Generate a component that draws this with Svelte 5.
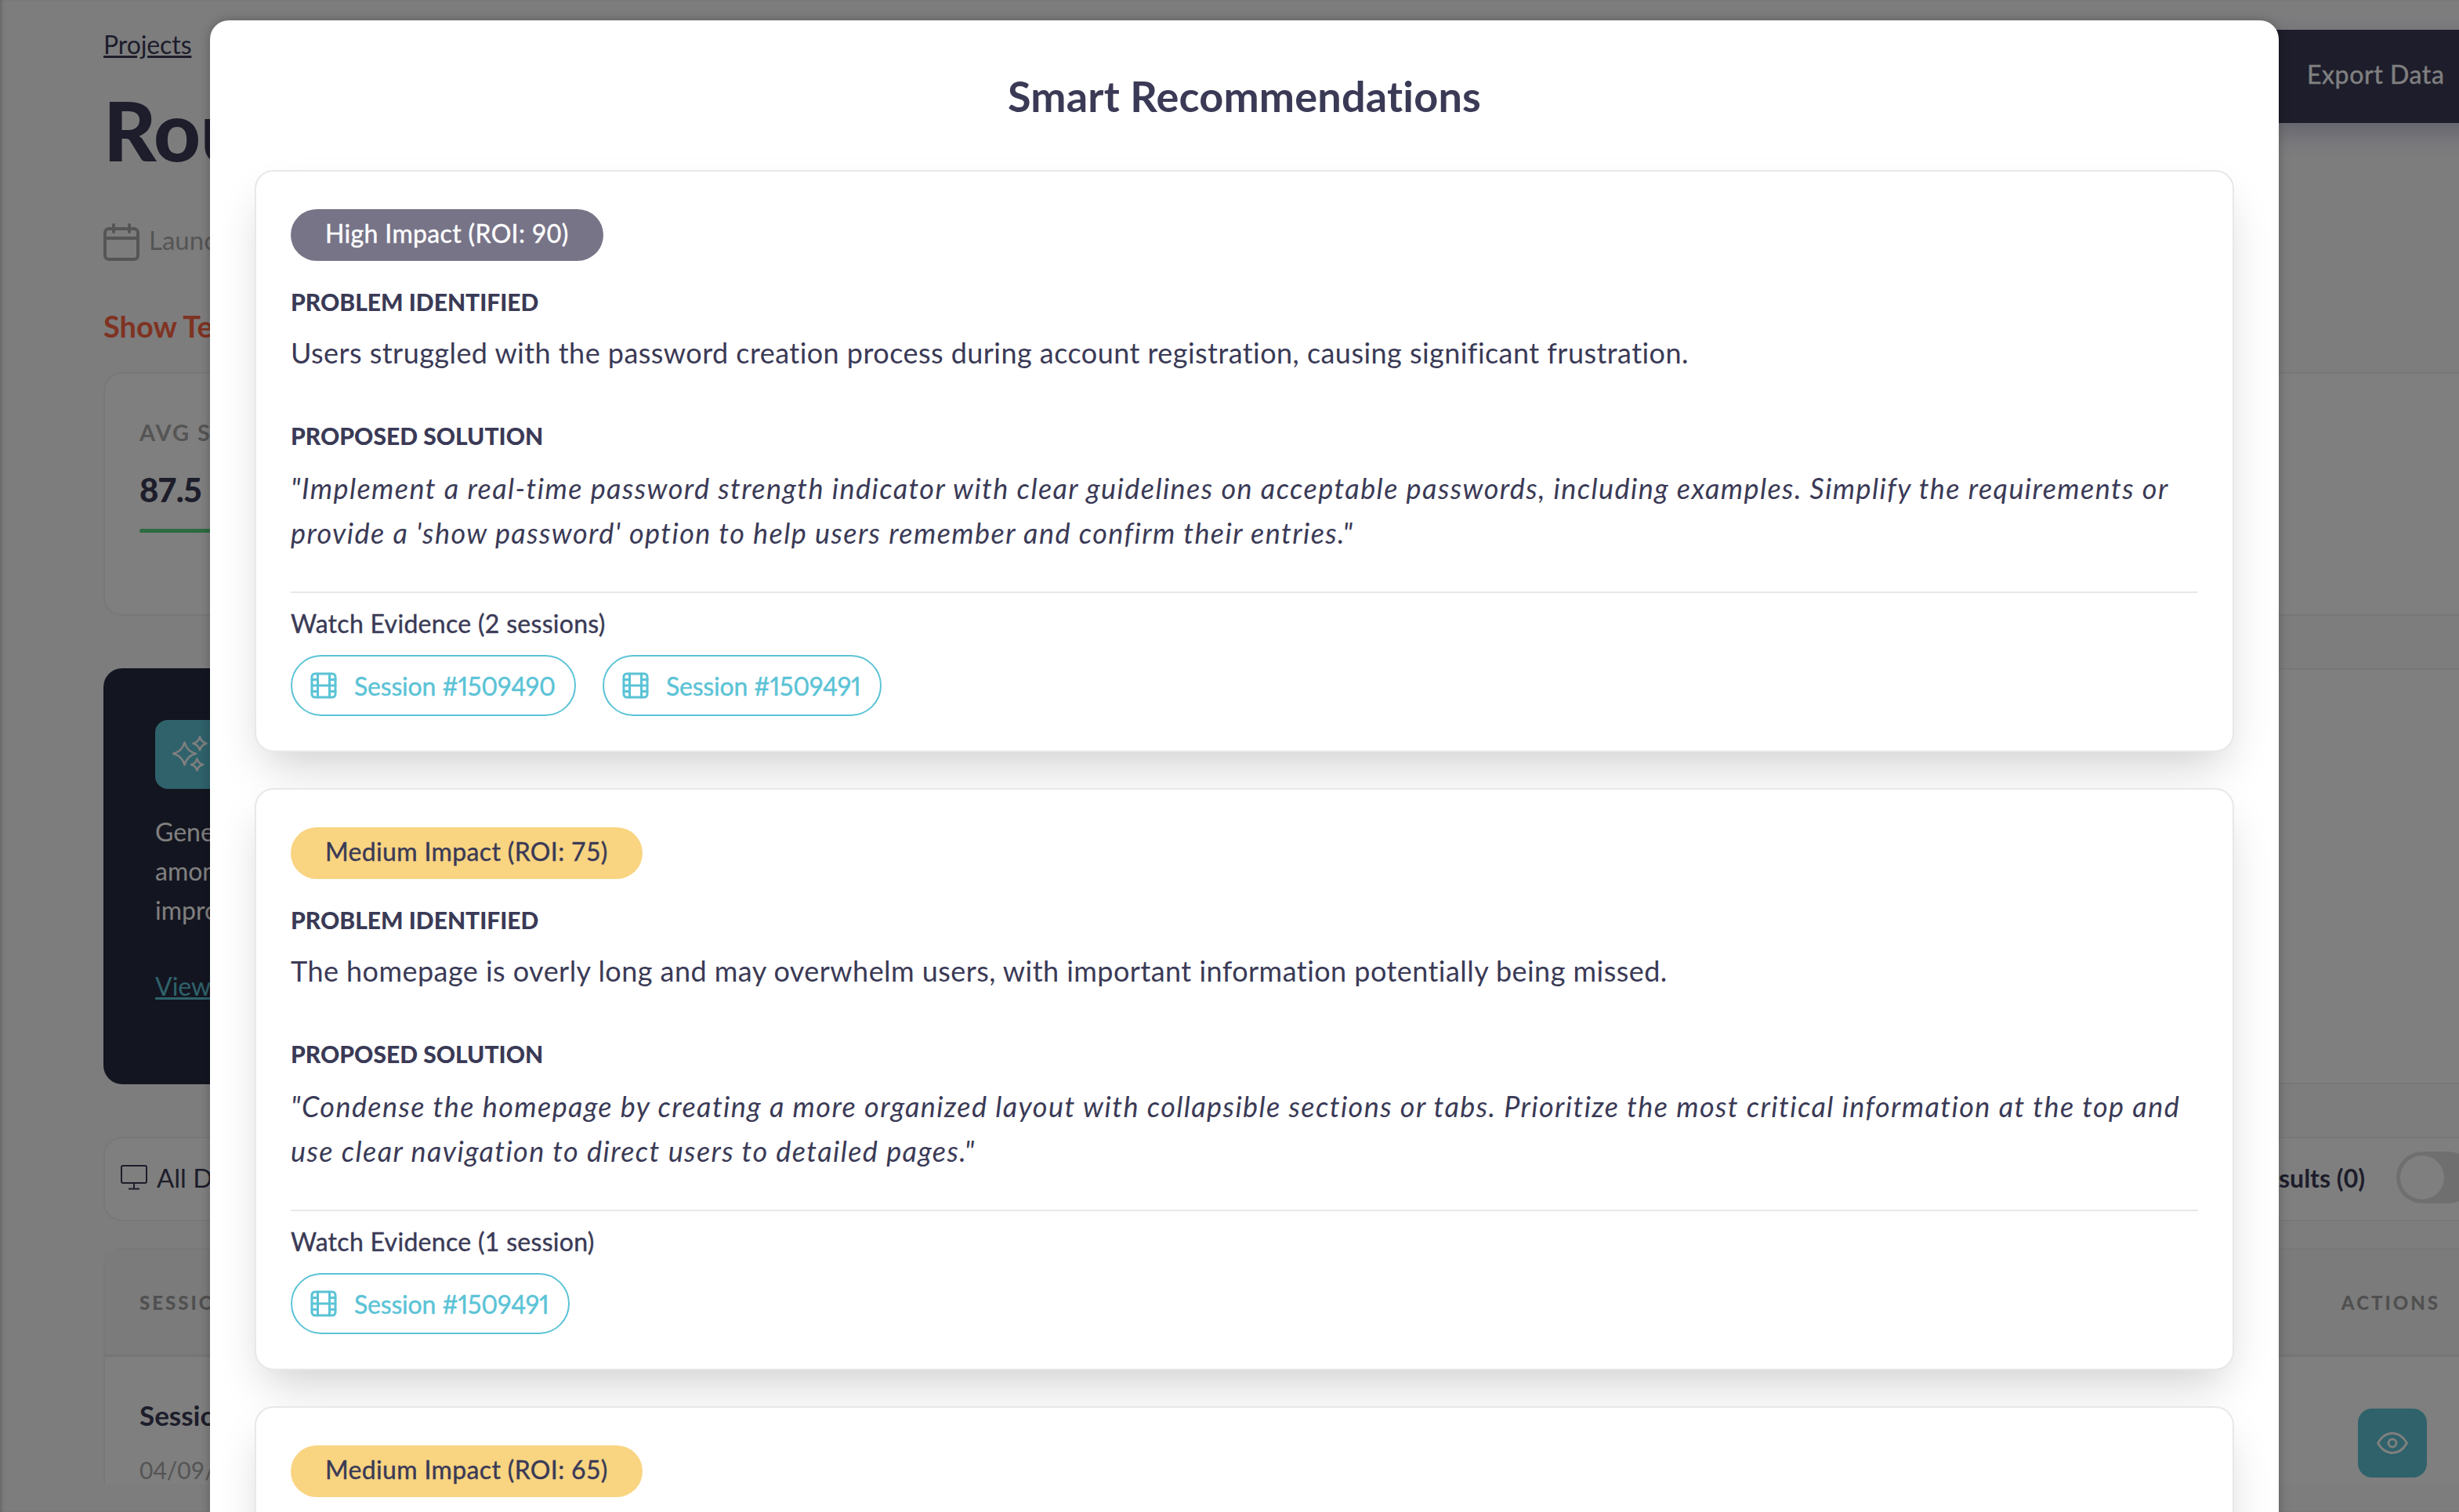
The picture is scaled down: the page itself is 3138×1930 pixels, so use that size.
<script lang="ts">
  const recommendations = [
    {
      impact: 'High Impact (ROI: 90)',
      level: 'high',
      problem: 'Users struggled with the password creation process during account registration, causing significant frustration.',
      solution: `"Implement a real-time password strength indicator with clear guidelines on acceptable passwords, including examples. Simplify the requirements or provide a 'show password' option to help users remember and confirm their entries."`,
      sessions: ['1509490', '1509491']
    },
    {
      impact: 'Medium Impact (ROI: 75)',
      level: 'medium',
      problem: 'The homepage is overly long and may overwhelm users, with important information potentially being missed.',
      solution: `"Condense the homepage by creating a more organized layout with collapsible sections or tabs. Prioritize the most critical information at the top and use clear navigation to direct users to detailed pages."`,
      sessions: ['1509491']
    },
    { impact: 'Medium Impact (ROI: 65)', level: 'medium', problem: '', solution: '', sessions: [] }
  ];

  /** Four-point star with concave sides */
  function star(cx: number, cy: number, r: number): string {
    const k = r * 0.2;
    return `M${cx} ${cy - r}Q${cx + k} ${cy - k} ${cx + r} ${cy}Q${cx + k} ${cy + k} ${cx} ${cy + r}Q${cx - k} ${cy + k} ${cx - r} ${cy}Q${cx - k} ${cy - k} ${cx} ${cy - r}Z`;
  }
</script>

<div class="viewport">
  <div class="page">
    <header class="header">
      <div>
        <a class="crumb" href="#projects">Projects</a>
        <h1>Round</h1>
        <div class="date">
          <svg width="46" height="48" viewBox="0 0 46 48" fill="none" stroke="currentColor" stroke-width="4" stroke-linecap="round">
            <rect x="2" y="7" width="42" height="39" rx="5" />
            <path d="M2 19h42M13 2v9M33 2v9" />
          </svg>
          <span>Launched</span>
        </div>
        <div class="show">Show Tests</div>
      </div>
      <button class="export">Export Data</button>
    </header>

    <section class="stats">
      <div class="stat-label">AVG SUS</div>
      <div class="stat-value">87.5</div>
      <div class="stat-bar"></div>
    </section>

    <section class="insight-row">
      <div class="insight">
        <div class="spark">
          <svg width="46" height="48" viewBox="0 0 46 48" fill="none" stroke="currentColor" stroke-width="2.6" stroke-linejoin="round">
            <path d={star(15.5, 23, 14.5)} />
            <path d={star(35, 10, 8.5)} />
            <path d={star(31.5, 37, 7.5)} />
          </svg>
        </div>
        <p>Generate smart recommendations<br />among your sessions to find<br />improvements</p>
        <a class="view" href="#view">View recommendations</a>
      </div>
      <div class="insight-rest"></div>
    </section>

    <section class="filters">
      <div class="device">
        <svg width="34" height="32" viewBox="0 0 34 32" fill="none" stroke="currentColor" stroke-width="2">
          <rect x="1" y="1" width="32" height="22" rx="2" />
          <path d="M17 23v7M10 30.500h14" />
        </svg>
        <span>All Devices</span>
      </div>
      <div class="results">
        <span>Show results (0)</span>
        <div class="toggle"><div class="knob"></div></div>
      </div>
    </section>

    <section class="table">
      <div class="thead">
        <span>SESSION</span>
        <span>ACTIONS</span>
      </div>
      <div class="trow">
        <div>
          <div class="session-name">Session #1509490</div>
          <div class="session-date">04/09/2025</div>
        </div>
        <button class="eye" aria-label="View session">
          <svg width="40" height="30" viewBox="0 0 40 30" fill="none" stroke="currentColor" stroke-width="3">
            <path d="M1.500 15C6 7 12.500 2.500 20 2.500S34 7 38.500 15C34 23 27.500 27.500 20 27.500S6 23 1.500 15z" />
            <circle cx="20" cy="15" r="5" />
          </svg>
        </button>
      </div>
    </section>
  </div>

  <div class="overlay"></div>

  <div class="modal">
    <h2>Smart Recommendations</h2>
    {#each recommendations as rec}
      <article class="card" class:cut={!rec.problem}>
        <span class="badge {rec.level}">{rec.impact}</span>
        {#if rec.problem}
          <h3>PROBLEM IDENTIFIED</h3>
          <p class="problem">{rec.problem}</p>
          <h3 class="solution-head">PROPOSED SOLUTION</h3>
          <p class="solution">{rec.solution}</p>
          <div class="evidence">
            <div class="evidence-title">Watch Evidence ({rec.sessions.length} {rec.sessions.length === 1 ? 'session' : 'sessions'})</div>
            <div class="pills">
              {#each rec.sessions as id}
                <a class="pill" href="#session">
                  <svg width="36" height="36" viewBox="0 0 24 24" fill="none" stroke="currentColor" stroke-width="2" stroke-linecap="round">
                    <rect x="2" y="2" width="20" height="20" rx="2.500" />
                    <path d="M7 2v20M17 2v20M2 12h20M2 7h5M2 17h5M17 17h5M17 7h5" />
                  </svg>
                  Session #{id}
                </a>
              {/each}
            </div>
          </div>
        {/if}
      </article>
    {/each}
  </div>
</div>

<style>
  :global(body) {
    margin: 0;
    font-family: 'Lato', 'Open Sans', sans-serif;
    color: #3a3a56;
  }

  .viewport {
    position: relative;
    width: 3138px;
    height: 1930px;
    overflow: hidden;
    background: #fbfbfd;
  }

  .page {
    width: 3190px;
    padding-left: 132px;
    box-sizing: border-box;
  }

  .header {
    display: flex;
    justify-content: space-between;
    align-items: flex-start;
    padding-top: 38px;
  }

  .crumb {
    display: block;
    width: max-content;
    font-size: 32px;
    line-height: 38px;
    letter-spacing: -0.1px;
    color: #3a3a56;
  }

  h1 {
    margin: 30px 0 0;
    font-size: 104px;
    line-height: 120px;
    font-weight: 900;
    color: #3a3a56;
  }

  .date {
    display: flex;
    align-items: center;
    gap: 12px;
    margin-top: 59px;
    height: 48px;
    font-size: 33px;
    color: #aaa;
  }

  .date span {
    padding-bottom: 6px;
  }

  .show {
    margin-top: 61px;
    font-size: 38px;
    line-height: 44px;
    font-weight: 700;
    color: #ff6644;
  }

  .export {
    width: 290px;
    height: 119px;
    border: 0;
    padding: 0 0 6px 44px;
    text-align: left;
    font: 400 32px 'Lato', sans-serif;
    -webkit-text-stroke: 0.4px currentColor;
    letter-spacing: 0.6px;
    color: #fff;
    background: #3a3a56;
    box-shadow: 0 12px 30px rgba(88, 88, 150, 0.35);
  }

  .stats {
    box-sizing: border-box;
    margin-top: 37px;
    height: 311px;
    padding: 60px 44px 0;
    border: 2px solid #f0f0f0;
    border-right: 0;
    border-radius: 24px 0 0 24px;
    background: #fff;
  }

  .stat-label {
    font-size: 29px;
    line-height: 30px;
    letter-spacing: 2px;
    font-weight: 700;
    color: #aaa;
  }

  .stat-value {
    margin-top: 30px;
    font-size: 42px;
    line-height: 56px;
    font-weight: 900;
    letter-spacing: -1px;
    color: #3a3a56;
  }

  .stat-bar {
    margin-top: 22px;
    height: 5px;
    width: 400px;
    border-radius: 3px;
    background: #5bd684;
  }

  .insight-row {
    display: flex;
    margin-top: 67px;
    height: 531px;
  }

  .insight {
    box-sizing: border-box;
    width: 900px;
    flex: none;
    padding: 66px;
    border-radius: 24px;
    background: #262a40;
    color: #fff;
  }

  .spark {
    display: flex;
    align-items: center;
    padding-left: 22px;
    box-sizing: border-box;
    width: 88px;
    height: 88px;
    border-radius: 16px;
    background: #5fc4d6;
  }

  .insight p {
    margin: 30px 0 0;
    font-size: 32px;
    line-height: 50px;
  }

  .view {
    display: block;
    margin-top: 52px;
    font-size: 32px;
    color: #5fc4d6;
  }

  .insight-rest {
    flex: 1;
    border-block: 2px solid #f0f0f0;
    background: #fff;
  }

  .filters {
    display: flex;
    justify-content: space-between;
    align-items: center;
    box-sizing: border-box;
    margin-top: 67px;
    height: 108px;
    padding: 0 30px 4px 20px;
    border: 2px solid #f0f0f0;
    border-radius: 24px 0 0 24px;
    background: #fff;
    font-size: 32px;
  }

  .device,
  .results {
    display: flex;
    align-items: center;
  }

  .device {
    gap: 12px;
    font-size: 33px;
  }

  .results {
    gap: 40px;
    font-weight: 700;
  }

  .toggle {
    display: flex;
    align-items: center;
    width: 100px;
    height: 66px;
    padding-left: 5px;
    box-sizing: border-box;
    border-radius: 33px;
    background: #dedede;
  }

  .knob {
    width: 56px;
    height: 56px;
    border-radius: 50%;
    background: #fff;
  }

  .table {
    margin-top: 34px;
    border: 2px solid #f0f0f0;
    border-bottom: 0;
    border-radius: 24px 0 0 0;
    background: #fff;
  }

  .thead {
    display: flex;
    justify-content: space-between;
    align-items: center;
    height: 134px;
    padding: 0 74px 0 44px;
    border-bottom: 3px solid #eaeaea;
    background: #f7f7f7;
    font-size: 24px;
    font-weight: 900;
    letter-spacing: 3px;
    color: #a0a0a0;
  }

  .trow {
    display: flex;
    justify-content: space-between;
    padding: 52px 91px 0 44px;
  }

  .session-name {
    font-size: 35px;
    line-height: 44px;
    font-weight: 700;
  }

  .session-date {
    margin-top: 30px;
    font-size: 30px;
    line-height: 36px;
    color: #aaa;
  }

  .eye {
    display: flex;
    align-items: center;
    justify-content: center;
    width: 88px;
    height: 88px;
    margin-top: 14px;
    border: 0;
    border-radius: 18px;
    background: #5fc4d6;
    color: #fff;
  }

  .overlay {
    position: absolute;
    inset: 0;
    background: rgba(0, 0, 0, 0.5);
    box-shadow: inset 4px 0 5px -2px rgba(0, 0, 0, 0.2);
  }

  .modal {
    position: absolute;
    top: 26px;
    left: 268px;
    bottom: -200px;
    box-sizing: border-box;
    width: 2640px;
    padding: 0 57px;
    overflow: hidden;
    border-radius: 24px 24px 0 0;
    background: #fff;
    box-shadow: 0 0 14px rgba(0, 0, 0, 0.25);
  }

  h2 {
    margin: 0;
    padding: 64px 0 62px;
    text-align: center;
    font-size: 54px;
    line-height: 65px;
    font-weight: 700;
    letter-spacing: 0.2px;
    color: #3a3a56;
  }

  .card {
    box-sizing: border-box;
    margin-bottom: 46px;
    padding: 48px 44px 44px;
    border: 2px solid #e8e8e8;
    border-radius: 24px;
    background: #fff;
    box-shadow: 0 28px 60px -14px rgba(0, 0, 0, 0.2);
  }

  .card.cut {
    min-height: 400px;
  }

  .badge {
    display: block;
    width: max-content;
    height: 66px;
    padding: 0 44px;
    border-radius: 33px;
    font-size: 32px;
    line-height: 62px;
    letter-spacing: 0.35px;
    -webkit-text-stroke: 0.4px currentColor;
  }

  .badge.high {
    background: #777488;
    color: #fff;
  }

  .badge.medium {
    background: #f9d481;
    color: #3a3a56;
  }

  h3 {
    margin: 33px 0 0;
    font-size: 30px;
    line-height: 38px;
    font-weight: 900;
    color: #3a3a56;
  }

  .solution-head {
    margin-top: 62px;
  }

  .problem {
    margin: 21px 0 0;
    font-size: 36px;
    line-height: 50px;
    letter-spacing: 0.45px;
  }

  .solution {
    margin: 20px 0 0;
    font-size: 36px;
    line-height: 57px;
    font-style: italic;
    letter-spacing: 1.42px;
  }

  .evidence {
    margin-top: 46px;
    padding-top: 20px;
    border-top: 2px solid #e8e8e8;
  }

  .evidence-title {
    font-size: 32px;
    line-height: 38px;
    letter-spacing: 0.3px;
    -webkit-text-stroke: 0.4px currentColor;
  }

  .pills {
    display: flex;
    gap: 34px;
    margin-top: 21px;
  }

  .pill {
    display: flex;
    align-items: center;
    gap: 21px;
    box-sizing: border-box;
    height: 78px;
    padding: 0 24px 0 22px;
    border: 2px solid #5bc3d6;
    border-radius: 39px;
    font-size: 32px;
    font-variant-numeric: proportional-nums;
    letter-spacing: -0.2px;
    -webkit-text-stroke: 0.4px currentColor;
    color: #5bc3d6;
    text-decoration: none;
  }
</style>
